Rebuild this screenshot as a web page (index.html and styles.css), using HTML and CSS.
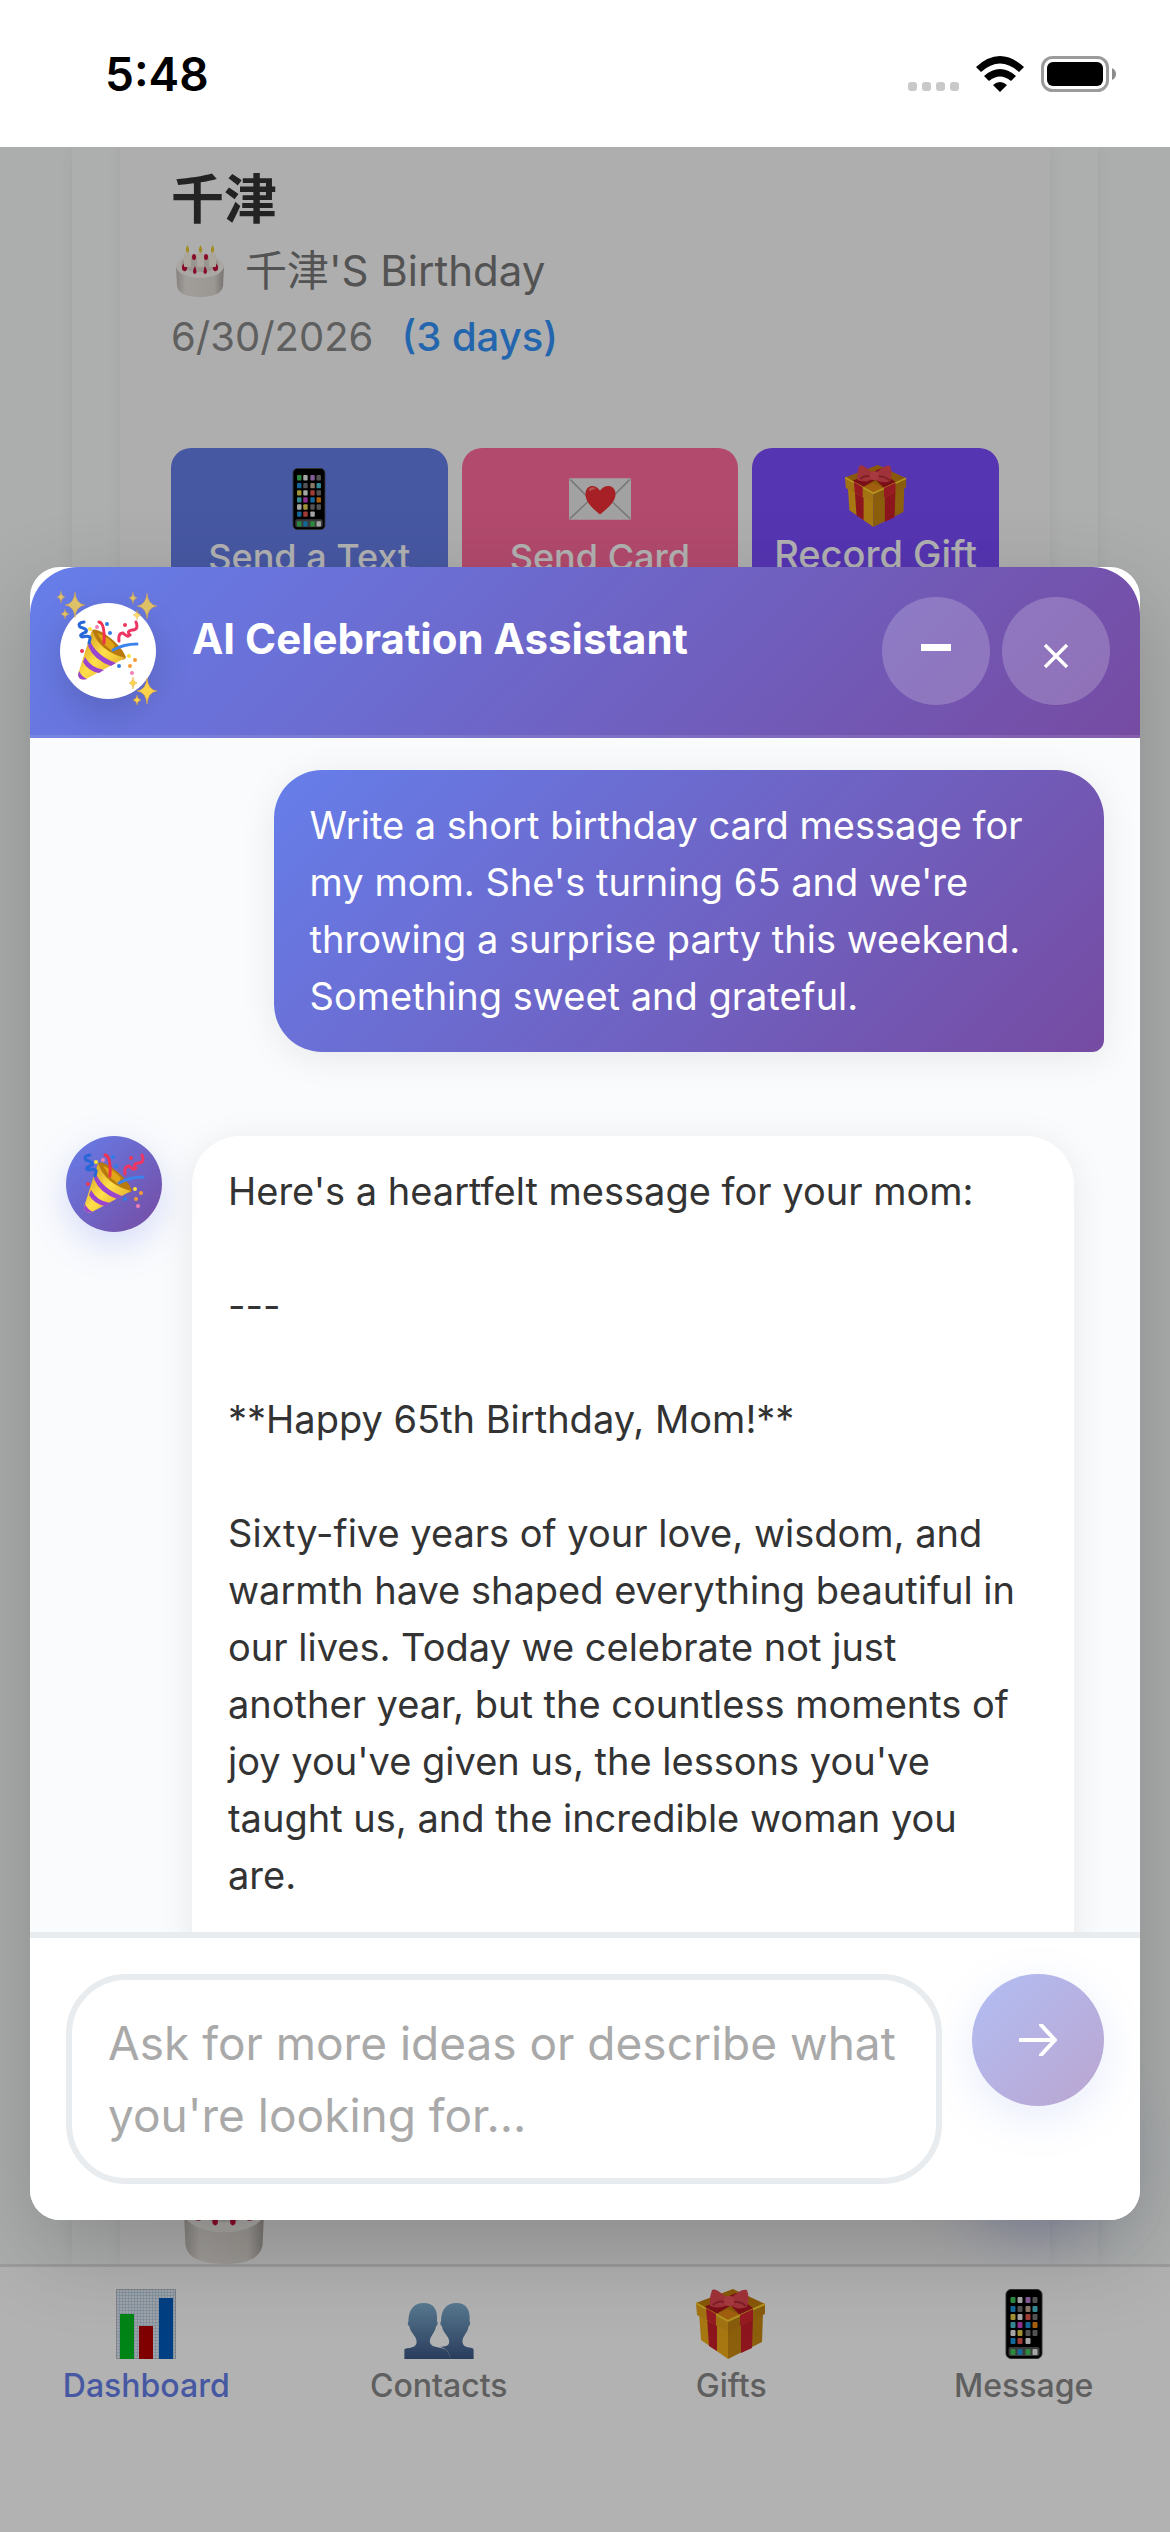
FILE: index.html
```html
<!DOCTYPE html>
<html lang="en">
<head>
    <meta charset="UTF-8">
    <meta name="viewport" content="width=device-width, initial-scale=1.0">
    <title>Dashboard</title>
    <link rel="stylesheet" href="styles.css">
</head>
<body>
    <!-- Shared icons -->
    <svg class="sprite" aria-hidden="true">
        <defs>
            <linearGradient id="gold" x1="0" y1="0" x2="1" y2="1">
                <stop offset="0" stop-color="#c98a12"/>
                <stop offset="0.5" stop-color="#ffe04a"/>
                <stop offset="1" stop-color="#d99a1c"/>
            </linearGradient>
            <linearGradient id="bust" x1="0" y1="0" x2="0" y2="1">
                <stop offset="0" stop-color="#7fafd0"/>
                <stop offset="1" stop-color="#3c5784"/>
            </linearGradient>
            <linearGradient id="cream" x1="0" y1="0" x2="1" y2="0">
                <stop offset="0" stop-color="#bdb9b4"/>
                <stop offset="0.2" stop-color="#e6e2dd"/>
                <stop offset="0.8" stop-color="#ded9d3"/>
                <stop offset="1" stop-color="#a9a5a1"/>
            </linearGradient>
            <pattern id="graph" width="3" height="3" patternUnits="userSpaceOnUse">
                <rect width="3" height="3" fill="#e2ebf3"/>
                <path d="M0 0H3M0 0V3" stroke="#a3bfd8" stroke-width="1"/>
            </pattern>
            <symbol id="popper" viewBox="0 0 62 62">
                <path d="M15 10Q19 8 28 14Q44 25 49 37Q48 41 43 39Q20 30 15 10Z" fill="#b87a0c"/>
                <path d="M20 13Q30 16 38 25L35 31L28 25Z" fill="#e0a416"/>
                <path d="M15 10Q22 31 48 38L9 59Q1 61 1 54Z" fill="url(#gold)"/>
                <path d="M13 21Q20 36 39 43L34 46Q17 40 11 26ZM8 37Q14 48 27 50L22 53Q11 51 6 42ZM2 51Q5 57 10 59Q2 61 1 55Z" fill="#9a45cf"/>
                <g fill="none" stroke-linecap="round" stroke-width="3">
                    <path d="M7 2Q0 3 3 7Q11 9 9 12Q1 15 5 17Q14 15 13 19L12 23" stroke="#2867d8"/>
                    <path d="M22 2Q28 3 27 23" stroke="#f2304f"/>
                    <path d="M59 2Q62 10 55 10Q49 11 53 15Q51 18 46 13Q41 13 42 21" stroke="#ee3665"/>
                    <path d="M36 30Q47 24 60 24" stroke="#3c83ee"/>
                </g>
                <g fill="#2f7ce6"><circle cx="30" cy="4" r="2"/><circle cx="33" cy="13" r="2"/><circle cx="42" cy="46" r="2"/></g>
                <g fill="#ee3659"><circle cx="48" cy="5" r="2"/><circle cx="5" cy="31" r="2"/></g>
                <g fill="#ffe23b"><circle cx="13" cy="9" r="2"/><circle cx="52" cy="36" r="2"/></g>
                <g fill="#f59b35"><circle cx="58" cy="40" r="2"/><circle cx="53" cy="46" r="2"/></g>
                <g fill="#f77fb5"><circle cx="20" cy="7" r="2"/><circle cx="55" cy="53" r="2"/></g>
            </symbol>
            <symbol id="sparkles" viewBox="0 0 30 30">
                <path d="M19 2Q20 14 29 15Q20 16 19 28Q18 16 9 15Q18 14 19 2ZM5 1Q5 6 9 7Q5 8 5 13Q5 8 1 7Q5 6 5 1ZM9 19Q9 23 13 24Q9 25 9 29Q9 25 5 24Q9 23 9 19Z" fill="#fcd34a" stroke="#e5a52c" stroke-width="0.5"/>
            </symbol>
            <symbol id="phone" viewBox="0 0 37 70">
                <rect x="0.5" y="0.5" width="36" height="69" rx="5" fill="#000" stroke="#4a4a4a"/>
                <rect x="3" y="58" width="31" height="9" rx="2" fill="#555"/>
                <g fill="#3fc45b"><rect x="5" y="8" width="5" height="6" rx="1"/><rect x="5" y="60" width="5" height="6" rx="1"/><rect x="20" y="60" width="5" height="6" rx="1"/></g>
                <g fill="#eee"><rect x="12" y="8" width="5" height="6" rx="1"/><rect x="12" y="25" width="5" height="6" rx="1"/><rect x="5" y="41" width="5" height="6" rx="1"/><rect x="20" y="49" width="5" height="6" rx="1"/><rect x="27" y="60" width="5" height="6" rx="1"/></g>
                <g fill="#bb82d6"><rect x="20" y="8" width="5" height="6" rx="1"/></g>
                <g fill="#777"><rect x="27" y="8" width="5" height="6" rx="1"/><rect x="12" y="17" width="5" height="6" rx="1"/><rect x="27" y="25" width="5" height="6" rx="1"/><rect x="20" y="41" width="5" height="6" rx="1"/><rect x="27" y="41" width="5" height="6" rx="1"/></g>
                <g fill="#1d96dc"><rect x="5" y="17" width="5" height="6" rx="1"/><rect x="20" y="33" width="5" height="6" rx="1"/><rect x="5" y="49" width="5" height="6" rx="1"/><rect x="12" y="60" width="5" height="6" rx="1"/></g>
                <g fill="#4cc3d4"><rect x="27" y="17" width="5" height="6" rx="1"/><rect x="5" y="33" width="5" height="6" rx="1"/></g>
                <g fill="#e7d24c"><rect x="5" y="25" width="5" height="6" rx="1"/><rect x="12" y="41" width="5" height="6" rx="1"/></g>
                <g fill="#e8574f"><rect x="20" y="25" width="5" height="6" rx="1"/><rect x="12" y="49" width="5" height="6" rx="1"/></g>
                <rect x="12" y="33" width="5" height="6" rx="1" fill="#cf46cf"/>
                <rect x="27" y="33" width="5" height="6" rx="1" fill="#f08a14"/>
                <rect x="20" y="17" width="5" height="6" rx="1" fill="#c5ab91"/>
            </symbol>
            <symbol id="gift" viewBox="0 0 70 70">
                <path d="M3 23L32 37V70L5 51Z" fill="#efab1a"/>
                <path d="M67 23L32 37V70L66 53Z" fill="#c98812"/>
                <path d="M11 28L21 32V62L13 57ZM45 32L57 27L56 59L45 64Z" fill="#c91f2c"/>
                <path d="M0 14L37 0L69 15L32 32Z" fill="#c47f0c"/>
                <path d="M20 25L32 20L44 26L32 32Z" fill="#e58a16"/>
                <path d="M8 18L40 4L50 8L20 25ZM35 17L48 12L58 20L44 26Z" fill="#b01622"/>
                <path d="M0 14L32 32V43L1 26Z" fill="#e8a51b"/>
                <path d="M69 15L32 32V43L69 25Z" fill="#c48414"/>
                <path d="M0 14L32 32L69 15" fill="none" stroke="#ffd42e" stroke-width="2"/>
                <path d="M10 19L20 25V37L11 31ZM44 26L57 20V31L44 37Z" fill="#d92632"/>
                <path d="M32 10Q20-2 16 1Q13 9 14 17Q24 21 32 15Q42 22 51 18Q54 9 51 1Q45-1 34 10Z" fill="#e64852"/>
                <path d="M17 16Q22 11 29 13M50 17Q44 12 37 13" stroke="#b52d38" stroke-width="2" fill="none"/>
                <rect x="28" y="7" width="10" height="10" rx="4" fill="#f0545c"/>
            </symbol>
            <symbol id="letter" viewBox="0 0 60 40">
                <rect width="60" height="40" rx="1" fill="#e9e9e9"/>
                <path d="M1 1L23 23M59 1L37 23M1 39L21 20M59 39L39 20" stroke="#adadad" stroke-width="1.5"/>
                <path d="M30 35C20 27 16 22 16 15C16 6 26 5 30 12C34 5 45 6 45 15C45 22 40 27 30 35Z" fill="#ef2f35"/>
                <path d="M20 12Q21 9 25 10" stroke="#ff7a70" stroke-width="2" fill="none"/>
            </symbol>
            <symbol id="cake" viewBox="0 0 50 52">
                <path d="M1 20L2 41Q4 52 25 52Q46 52 48 41L49 20Z" fill="url(#cream)"/>
                <ellipse cx="25" cy="21" rx="24" ry="12" fill="#f4f1ed"/>
                <ellipse cx="25" cy="19" rx="19" ry="8" fill="#dcd7d1"/>
                <g fill="#c3123d"><path d="M10 17Q14 22 11 26Q6 27 7 21ZM40 17Q36 22 39 26Q44 27 43 21ZM20 21Q23 28 20 29Q16 28 20 21ZM30 21Q27 28 30 29Q34 28 30 21Z"/><ellipse cx="19" cy="12" rx="2" ry="3"/><ellipse cx="31" cy="12" rx="2" ry="3"/></g>
                <g fill="#f6efe2"><rect x="9" y="8" width="7" height="14" rx="1"/><rect x="22" y="8" width="7" height="14" rx="1"/><rect x="34" y="8" width="7" height="14" rx="1"/></g>
                <path d="M12.500 0Q16 6 12.500 8Q9 6 12.500 0ZM25.500 0Q29 6 25.500 8Q22 6 25.500 0ZM37.500 0Q41 6 37.500 8Q34 6 37.500 0Z" fill="#e8c93b"/>
            </symbol>
            <symbol id="chart" viewBox="0 0 60 70">
                <rect width="60" height="70" fill="url(#graph)"/>
                <rect x="0.5" y="0.5" width="59" height="69" fill="none" stroke="#b5bcc4"/>
                <rect x="4" y="25" width="14" height="45" fill="#00bd20"/>
                <rect x="23" y="37" width="14" height="33" fill="#b80000"/>
                <rect x="43" y="9" width="14" height="61" fill="#005bbd"/>
            </symbol>
            <symbol id="people" viewBox="0 0 68 55">
                <path d="M19 0C29 0 33 7 32 18C33 19 33 22 31 23C30 30 25 32 25 38C26 44 34 43 39 45Q44 47 45 55H0V46C0 43 12 46 12 38C12 32 6 30 5 23C3 22 3 19 4 18C4 7 9 0 19 0Z" fill="url(#bust)"/>
                <path d="M51 0C61 0 65 7 64 18C65 19 65 22 63 23C62 30 57 32 57 38C58 46 68 42 68 46V55H45Q44 45 35 43C40 43 44 42 44 38C44 32 38 30 37 23C35 22 35 19 36 18C36 7 41 0 51 0Z" fill="url(#bust)"/>
            </symbol>
        </defs>
    </svg>

    <header class="status-bar">
        <span class="time">5:48</span>
        <div class="status-icons">
            <svg width="51" height="36" viewBox="0 0 51 36">
                <g fill="#c9c9c9"><rect y="26" width="9" height="9" rx="3"/><rect x="14" y="26" width="9" height="9" rx="3"/><rect x="28" y="26" width="9" height="9" rx="3"/><rect x="42" y="26" width="9" height="9" rx="3"/></g>
            </svg>
            <svg width="48" height="36" viewBox="0 0 48 36">
                <path d="M0 11Q24-11 48 11L43 16Q24-1 5 16ZM8 20Q24 6 40 20L35 25Q24 16 13 25ZM17 29Q24 23 31 29L24 36Z"/>
            </svg>
            <svg width="75" height="36" viewBox="0 0 75 36">
                <rect x="1.500" y="1.500" width="65" height="33" rx="10" fill="none" stroke="#9b9b9b" stroke-width="3"/>
                <rect x="6" y="6" width="56" height="24" rx="6"/>
                <path d="M71 12Q75 14 75 18Q75 22 71 24Z" fill="#8c8c8c"/>
            </svg>
        </div>
    </header>

    <div class="app">
        <main class="dashboard">
            <div class="panel">
                <section class="events">
                    <article class="event">
                        <h2>千津</h2>
                        <p class="event-name"><svg class="cake"><use href="#cake"/></svg>千津'S Birthday</p>
                        <p class="event-date">6/30/2026 <span class="days">(3 days)</span></p>
                        <div class="actions">
                            <button class="action text"><svg><use href="#phone"/></svg>Send a Text</button>
                            <button class="action card"><svg><use href="#letter"/></svg>Send Card</button>
                            <button class="action record"><svg><use href="#gift"/></svg>Record Gift</button>
                        </div>
                    </article>
                    <svg class="next-cake"><use href="#cake"/></svg>
                </section>
            </div>
            <button class="fab" aria-label="Open assistant"></button>
        </main>

        <nav class="tab-bar">
            <a href="#" class="tab active"><svg><use href="#chart"/></svg>Dashboard</a>
            <a href="#" class="tab"><svg class="low"><use href="#people"/></svg>Contacts</a>
            <a href="#" class="tab"><svg><use href="#gift"/></svg>Gifts</a>
            <a href="#" class="tab"><svg><use href="#phone"/></svg>Message</a>
        </nav>

        <div class="overlay">
            <div class="chat">
                <div class="chat-header">
                    <div class="chat-avatar">
                        <svg class="popper"><use href="#popper"/></svg>
                        <svg class="sparkle top-left"><use href="#sparkles"/></svg>
                        <svg class="sparkle top-right"><use href="#sparkles"/></svg>
                        <svg class="sparkle bottom-right"><use href="#sparkles"/></svg>
                    </div>
                    <h1>AI Celebration Assistant</h1>
                    <button class="round" aria-label="Minimize">
                        <svg width="30" height="30" viewBox="0 0 30 30"><rect y="8" width="30" height="7" fill="#fff"/></svg>
                    </button>
                    <button class="round" aria-label="Close">
                        <svg width="26" height="36" viewBox="0 0 26 36"><path d="M2 12L24 34M24 12L2 34" stroke="#fff" stroke-width="3.500"/></svg>
                    </button>
                </div>

                <div class="messages">
                    <div class="message user">
                        <div class="bubble">Write a short birthday card message for my mom. She's turning 65 and we're throwing a surprise party this weekend. Something sweet and grateful.</div>
                    </div>
                    <div class="message assistant">
                        <div class="message-avatar"><svg class="popper"><use href="#popper"/></svg></div>
                        <div class="bubble">
                            <p>Here's a heartfelt message for your mom:</p>
                            <p>---</p>
                            <p>**Happy 65th Birthday, Mom!**</p>
                            <p>Sixty-five years of your love, wisdom, and warmth have shaped everything beautiful in our lives. Today we celebrate not just another year, but the countless moments of joy you've given us, the lessons you've taught us, and the incredible woman you are.</p>
                        </div>
                    </div>
                </div>

                <form class="chat-input">
                    <textarea rows="2" aria-label="Message" placeholder="Ask for more ideas or describe what you're looking for..."></textarea>
                    <button type="button" class="send" aria-label="Send">
                        <svg width="38" height="32" viewBox="0 0 38 32"><path d="M1 16H36M22 1L36 16L22 31" fill="none" stroke="#fff" stroke-width="4" stroke-linecap="round" stroke-linejoin="round"/></svg>
                    </button>
                </form>
            </div>
        </div>
    </div>
</body>
</html>
```

FILE: styles.css
```css
* {
    box-sizing: border-box;
}
body {
    margin: 0;
    height: 100vh;
    display: flex;
    flex-direction: column;
    overflow: hidden;
    background-color: white;
    font-family: Inter, "Noto Sans CJK SC", sans-serif;
    color: #333;
}
h1, h2, p {
    margin: 0;
}
button {
    border: none;
    padding: 0;
    font-family: inherit;
    cursor: pointer;
}
.sprite {
    position: absolute;
    width: 0;
    height: 0;
}

/* Status bar */
.status-bar {
    flex: none;
    height: 147px;
    padding: 0 54px 0 105px;
    display: flex;
    align-items: center;
    justify-content: space-between;
}
.time {
    font-size: 46px;
    font-weight: 600;
    color: black;
}
.status-icons {
    display: flex;
    gap: 17px;
}

/* Dashboard */
.app {
    flex: 1;
    min-height: 0;
    position: relative;
    display: flex;
    flex-direction: column;
}
.dashboard {
    flex: 1;
    min-height: 0;
    position: relative;
    overflow: hidden;
    display: flex;
    padding: 0 72px;
    background-color: #f7faf9;
}
.panel {
    flex: 1;
    display: flex;
    padding: 0 48px;
    background-color: #f8faf9;
    box-shadow: 0 0 18px rgba(0,0,0,0.06);
}
.events {
    flex: 1;
    display: flex;
    flex-direction: column;
    justify-content: space-between;
    padding: 20px 51px 0;
    background-color: #fafafa;
    box-shadow: 0 0 15px rgba(0,0,0,0.06);
}
.event h2 {
    font-size: 53px;
    line-height: 66px;
    margin-bottom: 5px;
}
.event-name, .event-date {
    display: flex;
    align-items: center;
    font-size: 42px;
    line-height: 66px;
    color: #777;
}
.event-date {
    gap: 28px;
    font-size: 40px;
    color: #888;
}
.days {
    color: #3392fa;
    font-weight: 500;
}
.cake {
    width: 50px;
    height: 52px;
    margin: 0 20px 0 4px;
}
.actions {
    display: grid;
    grid-template-columns: 1fr 1fr auto;
    gap: 14px;
    margin-top: 78px;
}
.action {
    height: 150px;
    padding-top: 20px;
    display: flex;
    flex-direction: column;
    align-items: center;
    gap: 5px;
    border-radius: 20px;
    color: white;
    font-size: 36px;
    font-weight: 500;
    line-height: 44px;
}
.action svg {
    width: 62px;
    height: 62px;
}
.action.text {
    background-color: #667eea;
}
.action.card {
    background-color: #ff6b9d;
}
.action.record {
    padding: 17px 22px 0;
    background-color: #7c4dff;
    font-size: 38px;
}
.next-cake {
    width: 84px;
    height: 87px;
    margin-left: 11px;
}
.fab {
    position: absolute;
    right: 66px;
    bottom: 60px;
    width: 132px;
    height: 132px;
    border-radius: 50%;
    background-color: #667eea;
    box-shadow: 0 18px 72px rgba(102,126,234,0.5);
}

/* Tab bar */
.tab-bar {
    flex: none;
    height: 268px;
    display: flex;
    padding-top: 22px;
    background-color: white;
    border-top: 3px solid #e0e0e0;
}
.tab {
    flex: 1;
    display: flex;
    flex-direction: column;
    align-items: center;
    gap: 9px;
    color: #888;
    font-size: 32px;
    font-weight: 500;
    line-height: 36px;
    text-decoration: none;
}
.tab.active {
    color: #667eea;
}
.tab svg {
    width: 70px;
    height: 70px;
}
.tab .low {
    height: 56px;
    margin-top: 14px;
}

/* Assistant */
.overlay {
    position: absolute;
    inset: 0;
    display: flex;
    padding: 420px 30px 312px;
    background-color: rgba(0,0,0,0.3);
    overflow: hidden;
}
.chat {
    flex: 1;
    min-width: 0;
    display: flex;
    flex-direction: column;
    background-color: white;
    border-radius: 30px;
    box-shadow: 0 30px 90px rgba(0,0,0,0.2);
}
.chat-header {
    display: flex;
    align-items: center;
    gap: 12px;
    padding: 30px;
    border-bottom: 3px solid rgba(255,255,255,0.1);
    border-radius: 48px 48px 0 0;
    background: linear-gradient(135deg, #667eea, #764ba2) border-box;
}
.chat-header h1 {
    flex: 1;
    padding: 0 0 24px 24px;
    color: white;
    font-size: 42px;
    font-weight: 700;
    line-height: 50px;
}
.chat-avatar, .message-avatar {
    flex: none;
    position: relative;
    width: 96px;
    height: 96px;
    display: flex;
    align-items: center;
    justify-content: center;
    border-radius: 50%;
    background-color: white;
    box-shadow: 0 12px 36px rgba(0,0,0,0.15);
}
.popper {
    width: 62px;
    height: 62px;
}
.sparkle {
    position: absolute;
    width: 30px;
    height: 30px;
}
.top-left {
    left: -4px;
    top: -13px;
    opacity: 0.8;
}
.top-right {
    right: -2px;
    top: -12px;
    opacity: 0.8;
}
.bottom-right {
    right: -2px;
    bottom: -7px;
}
.round {
    width: 108px;
    height: 108px;
    display: flex;
    align-items: center;
    justify-content: center;
    border-radius: 50%;
    background-color: rgba(255,255,255,0.2);
}
.messages {
    flex: 1;
    min-height: 0;
    overflow: hidden;
    display: flex;
    flex-direction: column;
    gap: 84px;
    padding: 32px 36px 0;
    background-color: #fafbfd;
}
.message {
    flex: none;
    display: flex;
    align-items: flex-start;
    gap: 30px;
}
.bubble {
    padding: 27px 36px;
    border-radius: 48px;
    font-size: 38px;
    line-height: 57px;
    box-shadow: 0 6px 36px rgba(0,0,0,0.08);
}
.user {
    justify-content: flex-end;
}
.user .bubble {
    max-width: 80%;
    color: white;
    background: linear-gradient(135deg, #667eea, #764ba2);
    border-bottom-right-radius: 12px;
}
.assistant .bubble {
    flex: 1;
    margin-right: 30px;
    padding-right: 48px;
    background-color: white;
}
.assistant p {
    margin-bottom: 57px;
}
.message-avatar {
    background: linear-gradient(135deg, #667eea, #764ba2);
    box-shadow: 0 12px 36px rgba(102,126,234,0.25);
}
.chat-input {
    flex: none;
    display: flex;
    align-items: flex-start;
    gap: 30px;
    padding: 36px;
    border-top: 6px solid #e9ecef;
    border-radius: 0 0 30px 30px;
    background-color: white;
}
textarea {
    flex: 1;
    min-width: 0;
    padding: 27px 36px;
    border: 6px solid #e9ecef;
    border-radius: 60px;
    background-color: white;
    font-family: inherit;
    font-size: 46px;
    line-height: 72px;
    resize: none;
    overflow: hidden;
}
textarea::placeholder {
    color: #a9a9a9;
}
.send {
    flex: none;
    width: 132px;
    height: 132px;
    display: flex;
    align-items: center;
    justify-content: center;
    border-radius: 50%;
    background: linear-gradient(135deg, #b2bef4, #baa5d0);
    box-shadow: 0 12px 45px rgba(102,126,234,0.15);
}
```
